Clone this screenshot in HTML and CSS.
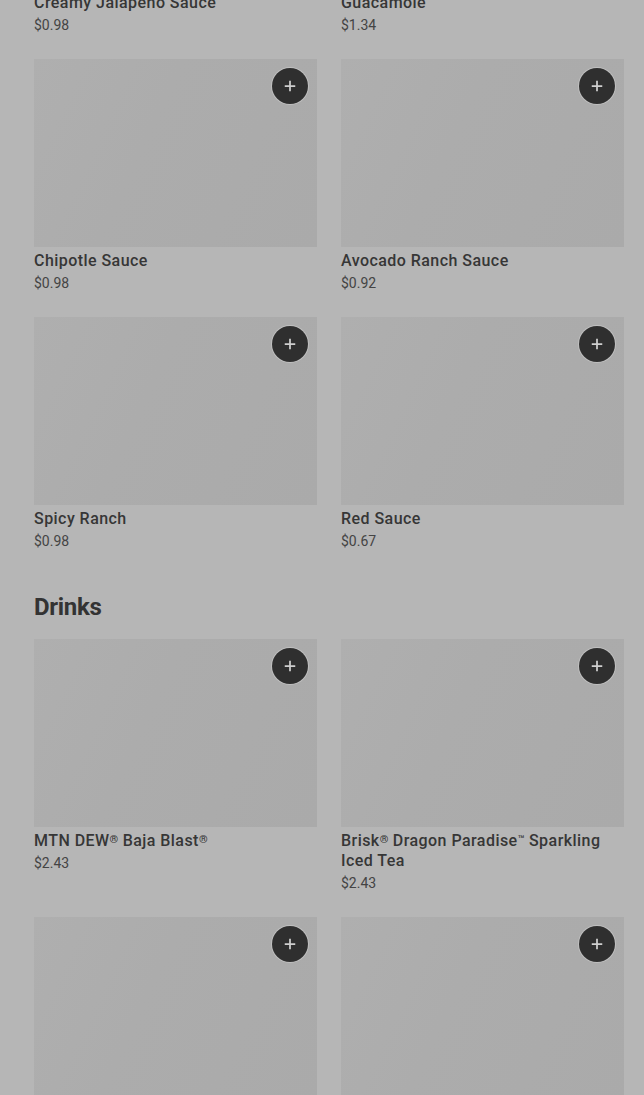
FILE: index.html
```html
<!DOCTYPE html>
<html lang="en">
<head>
    <meta charset="UTF-8">
    <meta name="viewport" content="width=device-width, initial-scale=1.0">
    <title>Menu</title>
    <link rel="stylesheet" href="styles.css">
</head>
<body>
    <div class="menu">
        <section class="section section-first">
            <div class="grid">
                <div class="card">
                    <div class="thumb"><button class="add" type="button" aria-label="Add"><svg viewBox="0 0 16 16" width="14" height="14"><path d="M7 2h2v5h5v2H9v5H7V9H2V7h5z"/></svg></button></div>
                    <div class="name">Creamy Jalapeño Sauce</div>
                    <div class="price">$0.98</div>
                </div>
                <div class="card">
                    <div class="thumb"><button class="add" type="button" aria-label="Add"><svg viewBox="0 0 16 16" width="14" height="14"><path d="M7 2h2v5h5v2H9v5H7V9H2V7h5z"/></svg></button></div>
                    <div class="name">Guacamole</div>
                    <div class="price">$1.34</div>
                </div>
                <div class="card">
                    <div class="thumb"><button class="add" type="button" aria-label="Add"><svg viewBox="0 0 16 16" width="14" height="14"><path d="M7 2h2v5h5v2H9v5H7V9H2V7h5z"/></svg></button></div>
                    <div class="name">Chipotle Sauce</div>
                    <div class="price">$0.98</div>
                </div>
                <div class="card">
                    <div class="thumb"><button class="add" type="button" aria-label="Add"><svg viewBox="0 0 16 16" width="14" height="14"><path d="M7 2h2v5h5v2H9v5H7V9H2V7h5z"/></svg></button></div>
                    <div class="name">Avocado Ranch Sauce</div>
                    <div class="price">$0.92</div>
                </div>
                <div class="card">
                    <div class="thumb"><button class="add" type="button" aria-label="Add"><svg viewBox="0 0 16 16" width="14" height="14"><path d="M7 2h2v5h5v2H9v5H7V9H2V7h5z"/></svg></button></div>
                    <div class="name">Spicy Ranch</div>
                    <div class="price">$0.98</div>
                </div>
                <div class="card">
                    <div class="thumb"><button class="add" type="button" aria-label="Add"><svg viewBox="0 0 16 16" width="14" height="14"><path d="M7 2h2v5h5v2H9v5H7V9H2V7h5z"/></svg></button></div>
                    <div class="name">Red Sauce</div>
                    <div class="price">$0.67</div>
                </div>
            </div>
        </section>

        <section class="section">
            <h2>Drinks</h2>
            <div class="grid">
                <div class="card">
                    <div class="thumb"><button class="add" type="button" aria-label="Add"><svg viewBox="0 0 16 16" width="14" height="14"><path d="M7 2h2v5h5v2H9v5H7V9H2V7h5z"/></svg></button></div>
                    <div class="name">MTN DEW<span class="mark">®</span> Baja Blast<span class="mark">®</span></div>
                    <div class="price">$2.43</div>
                </div>
                <div class="card">
                    <div class="thumb"><button class="add" type="button" aria-label="Add"><svg viewBox="0 0 16 16" width="14" height="14"><path d="M7 2h2v5h5v2H9v5H7V9H2V7h5z"/></svg></button></div>
                    <div class="name">Brisk<span class="mark">®</span> Dragon Paradise<span class="mark">™</span> Sparkling Iced Tea</div>
                    <div class="price">$2.43</div>
                </div>
                <div class="card">
                    <div class="thumb"><button class="add" type="button" aria-label="Add"><svg viewBox="0 0 16 16" width="14" height="14"><path d="M7 2h2v5h5v2H9v5H7V9H2V7h5z"/></svg></button></div>
                    <div class="name">Pepsi<span class="mark">®</span></div>
                    <div class="price">$2.43</div>
                </div>
                <div class="card">
                    <div class="thumb"><button class="add" type="button" aria-label="Add"><svg viewBox="0 0 16 16" width="14" height="14"><path d="M7 2h2v5h5v2H9v5H7V9H2V7h5z"/></svg></button></div>
                    <div class="name">Diet Pepsi<span class="mark">®</span></div>
                    <div class="price">$2.43</div>
                </div>
            </div>
        </section>
    </div>
</body>
</html>
```

FILE: styles.css
```css
body {
    margin: 0;
    padding: 0;
    background-color: #b6b6b6;
    font-family: Roboto, "Liberation Sans", sans-serif;
    color: #333;
    overflow: hidden;
}

.menu {
    padding: 0 20px 0 34px;
}

.section-first {
    margin-top: -199px;
}

.section h2 {
    margin: 40px 0 16px;
    font-size: 24px;
    line-height: 32px;
    font-weight: 700;
    letter-spacing: -0.3px;
    color: #333;
}

.grid {
    display: grid;
    grid-template-columns: 1fr 1fr;
    column-gap: 24px;
    row-gap: 24px;
}

.thumb {
    position: relative;
    height: 188px;
    background: linear-gradient(115deg, #afafaf 0%, #acacac 40%, #aaaaaa 100%);
    margin-bottom: 4px;
}

.add {
    position: absolute;
    top: 9px;
    right: 9px;
    width: 36px;
    height: 36px;
    padding: 0;
    border: none;
    border-radius: 50%;
    background-color: #2f2f2f;
    box-shadow: 0 0 0 1px rgba(255, 255, 255, 0.25);
    display: flex;
    align-items: center;
    justify-content: center;
    cursor: pointer;
}

.add svg {
    fill: #cfcfcf;
}

.name {
    font-size: 16px;
    line-height: 20px;
    font-weight: 500;
    letter-spacing: 0.45px;
    color: #363636;
}

.name .mark {
    font-size: 11px;
    letter-spacing: 0;
    vertical-align: 3px;
    line-height: 0;
}

.price {
    font-size: 14px;
    line-height: 20px;
    color: #444;
    margin-top: 2px;
}
```
